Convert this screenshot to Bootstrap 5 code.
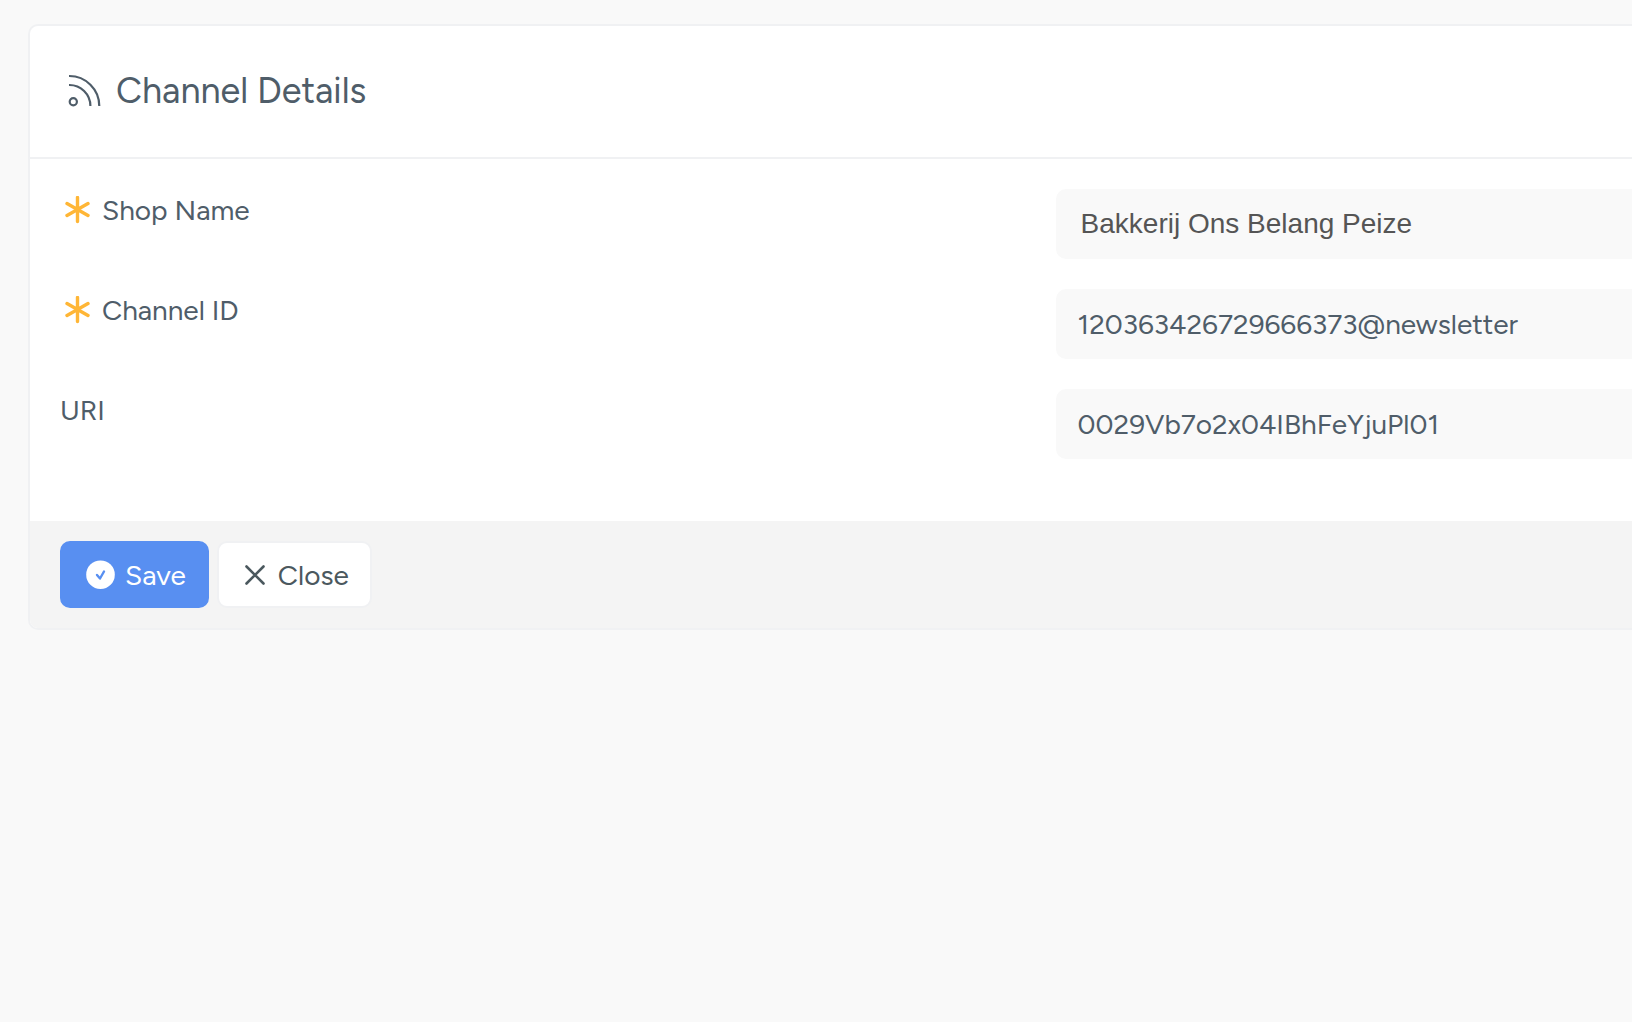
<!DOCTYPE html>
<html lang="en">
<head>
<meta charset="utf-8">
<meta name="viewport" content="width=device-width, initial-scale=1">
<title>Channel Details</title>
<link href="https://cdn.jsdelivr.net/npm/bootstrap@5.3.0/dist/css/bootstrap.min.css" rel="stylesheet">
<style>
  body { background: #f9f9f9; color: #4f5d69; font-family: Figtree, Lato, sans-serif; font-size: 28px; line-height: 42px; }
  .panel { margin: 24px 0 0 28px; border: 2px solid #f0f1f3; border-right: 0; border-radius: 10px 0 0 10px; background: #fff; overflow: hidden; }
  .panel-head { padding: 41px 36px 42px; border-bottom: 2px solid #f0f1f3; gap: 14px; }
  .panel-title { font-size: 36px; line-height: 48px; font-weight: 400; }
  .panel-fields { padding: 30px 0 32px 30px; }
  .field-row { display: grid; grid-template-columns: 19fr 11fr; margin-bottom: 30px; }
  .field-label { gap: 10px; }
  .field-box { height: 70px; border: 0; border-radius: 10px 0 0 10px; background: #f9f9f9; color: #4f5d69; font-size: 28px; padding: 0 22px; }
  .field-box:focus { background: #f9f9f9; color: #4f5d69; }
  .shop-box, .shop-box:focus { font-family: Helvetica, "Liberation Sans", sans-serif; color: #555; padding-left: 25px; }
  .panel-foot { padding: 20px 30px; background: #f4f4f4; gap: 8px; }
  .action { height: 67px; border: 2px solid #f0f1f3; border-radius: 10px; font-size: 28px; line-height: 42px; padding: 0 21px 0 23px; gap: 10px; }
  .action-save, .action-save:hover { background: #588ff1; border-color: #588ff1; color: #fff; }
  .action-close, .action-close:hover { background: #fff; border-color: #f0f1f3; color: #4b585e; }
</style>
</head>
<body>
<svg class="d-none" xmlns="http://www.w3.org/2000/svg">
  <symbol id="required" viewBox="0 0 28 28">
    <path d="M13.500 1.500V25.500M3 7.500L24 19.500M24 7.500L3 19.500" fill="none" stroke="#ffb636" stroke-width="3.400" stroke-linecap="round"/>
  </symbol>
</svg>
<main>
  <form class="panel">
    <header class="panel-head d-flex align-items-center">
      <svg width="36" height="36" viewBox="0 0 36 36" fill="none" stroke="#4f5d69" stroke-width="2.200" aria-hidden="true">
        <circle cx="7.300" cy="28.700" r="3.600"/>
        <path d="M3 12A21 21 0 0 1 24.400 33M3 3A30 30 0 0 1 33.300 33"/>
      </svg>
      <h1 class="panel-title m-0">Channel Details</h1>
    </header>
    <div class="panel-fields">
      <div class="field-row">
        <label class="field-label d-flex align-items-center align-self-start ps-1" for="shop"><svg width="28" height="28" aria-hidden="true"><use href="#required"/></svg>Shop Name</label>
        <input class="form-control field-box shop-box" id="shop" type="text" value="Bakkerij Ons Belang Peize">
      </div>
      <div class="field-row">
        <label class="field-label d-flex align-items-center align-self-start ps-1" for="channel"><svg width="28" height="28" aria-hidden="true"><use href="#required"/></svg>Channel ID</label>
        <input class="form-control field-box" id="channel" type="text" value="120363426729666373@newsletter">
      </div>
      <div class="field-row">
        <label class="field-label align-self-start" for="uri">URI</label>
        <input class="form-control field-box" id="uri" type="text" value="0029Vb7o2x04IBhFeYjuPl01">
      </div>
    </div>
    <footer class="panel-foot d-flex">
      <button type="submit" class="btn action action-save d-flex align-items-center">
        <svg width="30" height="30" viewBox="0 0 30 30" aria-hidden="true"><circle cx="15.500" cy="14.700" r="14.300" fill="#fff"/><path d="M12 15L15 18.500L19 11.500" fill="none" stroke="#588ff1" stroke-width="2.400" stroke-linecap="round" stroke-linejoin="round"/></svg>
        Save
      </button>
      <button type="button" class="btn action action-close d-flex align-items-center">
        <svg width="26" height="28" viewBox="0 0 26 28" aria-hidden="true"><path d="M4.500 5.500L21.500 22.500M21.500 5.500L4.500 22.500" fill="none" stroke="#4b585e" stroke-width="2.600" stroke-linecap="round"/></svg>
        Close
      </button>
    </footer>
  </form>
</main>
<script src="https://cdn.jsdelivr.net/npm/bootstrap@5.3.0/dist/js/bootstrap.bundle.min.js"></script>
</body>
</html>
